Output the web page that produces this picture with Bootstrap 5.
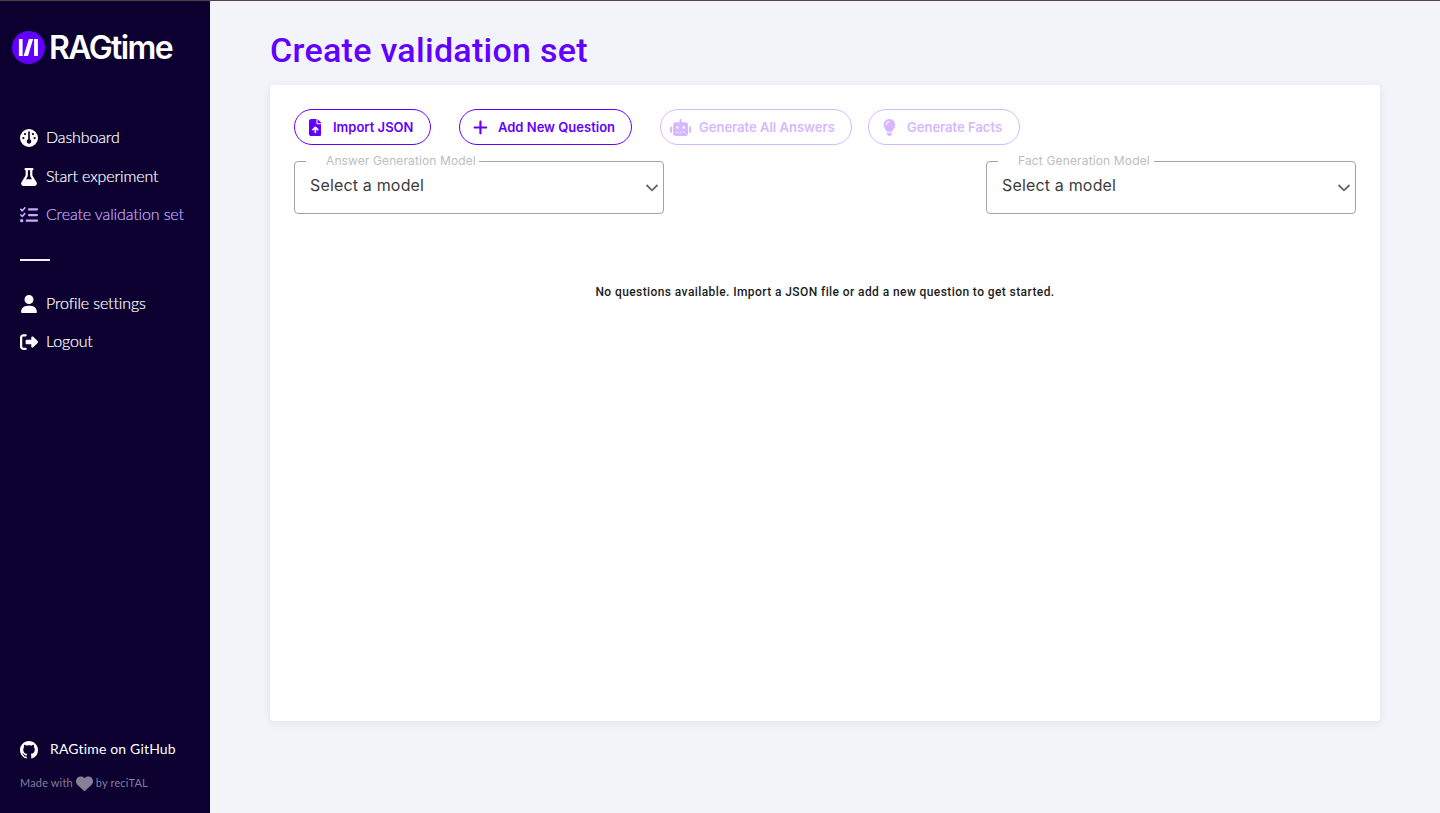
<!DOCTYPE html>
<html lang="en">
<head>
<meta charset="utf-8">
<meta name="viewport" content="width=device-width, initial-scale=1">
<title>RAGtime</title>
<link href="https://cdn.jsdelivr.net/npm/bootstrap@5.3.0/dist/css/bootstrap.min.css" rel="stylesheet">
<style>
body { font-family: Inter, sans-serif; background: #f3f4fa; border-top: 1px solid #54403f; overflow: hidden; }
svg { display: block; flex: none; fill: currentColor; }
.sidebar { width: 210px; background: #0c0030; font-family: Lato, sans-serif; }
.brand { padding: 29px 0 0 12px; gap: 4px; height: 118px; }
.brand-name { font: 600 32px/34px Inter, sans-serif; letter-spacing: -1.6px; padding-top: 1px; }
.side-link { height: 38.5px; padding: 0 0 0 20px; gap: 8px; font-size: 16px; font-weight: 300; line-height: 20px; color: #fff; letter-spacing: -.13px; white-space: nowrap; }
.side-link svg { width: 18px; height: 18px; }
.side-link span { padding-bottom: 2px; -webkit-text-stroke: .2px currentColor; }
.side-link.active { color: #c8aaff; }
.side-rule { width: 30px; height: 2px; margin: 24px 0 24px 20px; background: #f3f0f8; }
.github { padding-left: 20px; gap: 12px; height: 30px; font-size: 14px; line-height: 20px; letter-spacing: .17px; }
.github span { padding-bottom: 2px; }
.credit { padding-left: 20px; gap: 3px; height: 20px; margin: 8px 0 21px; font-size: 11px; letter-spacing: .15px; color: #857f98; }
.page { padding: 0 60px; }
.page-title { font: 500 34px/40px Roboto, sans-serif; letter-spacing: .29px; color: #6200ff; margin: 29px 0 15px; }
.panel { height: 636px; padding: 24px; border-radius: 4px; box-shadow: 0 2px 10px rgba(20,20,50,.08); }
.pill { --bs-btn-color: #6200ff; --bs-btn-border-color: #6200ff; --bs-btn-hover-bg: #6200ff; --bs-btn-disabled-color: #d5b8ff; --bs-btn-disabled-border-color: #d5b8ff; --bs-btn-disabled-opacity: 1; height: 36px; padding: 0; font-size: 13px; font-weight: 600; line-height: 20px; white-space: nowrap; }
.pill-icon { width: 24px; margin: 0 6px 0 8px; }
.pill svg { height: 17px; width: auto; }
.model-box { width: 370px; height: 61px; border: 1px solid #a3a3a3; border-radius: 4px; margin: 0; padding: 0 0 0 11px; min-width: 0; }
.model-box legend { float: none; width: 173px; height: 16px; padding-left: 20px; margin: 0; font-size: 12px; line-height: 16px; letter-spacing: .11px; color: #bdbdbd; white-space: nowrap; }
.model-box.fact legend { width: 156px; letter-spacing: .15px; }
.model-value { padding: 0 4px; height: 34px; font-size: 16px; line-height: 32px; letter-spacing: .17px; color: #3c3c3c; }
.model-value svg { margin-top: 14px; }
.empty-note { margin-top: 68px; font: 500 12px/20px Roboto, sans-serif; letter-spacing: .41px; color: #1d1d1d; }
</style>
</head>
<body>
<div class="d-flex vh-100">
  <nav class="sidebar d-flex flex-column text-white flex-shrink-0">
    <div class="brand d-flex align-items-start">
      <svg width="33" height="34" viewBox="0 0 33 34"><ellipse cx="16.5" cy="17.5" rx="16.5" ry="16.5" fill="#6200ff"/><path fill="#fff" d="M6.9 9h3.7v17H6.9zM16.9 9h4.2L16 26h-4.4zM22.1 9h3.8v17h-3.8z"/></svg>
      <span class="brand-name">RAGtime</span>
    </div>
    <a class="side-link d-flex align-items-center text-decoration-none" href="#"><svg viewBox="0 0 512 512"><path fill-rule="evenodd" d="M0 256a256 256 0 1 1 512 0A256 256 0 1 1 0 256zM320 352c0-26.9-16.5-49.9-40-59.3V88c0-13.3-10.7-24-24-24s-24 10.7-24 24V292.7c-23.5 9.5-40 32.5-40 59.3c0 35.3 28.7 64 64 64s64-28.7 64-64zM144 176a32 32 0 1 0 0-64 32 32 0 1 0 0 64zm-16 80a32 32 0 1 0-64 0 32 32 0 1 0 64 0zm288 32a32 32 0 1 0 0-64 32 32 0 1 0 0 64zM400 144a32 32 0 1 0-64 0 32 32 0 1 0 64 0z"/></svg><span>Dashboard</span></a>
    <a class="side-link d-flex align-items-center text-decoration-none" href="#"><svg viewBox="-32 0 512 512"><path d="M288 0H160 128C110.3 0 96 14.3 96 32s14.3 32 32 32V196.8c0 11.8-3.3 23.5-9.5 33.5L10.3 406.2C3.6 417.2 0 429.7 0 442.6C0 480.9 31.1 512 69.4 512H378.6c38.3 0 69.4-31.1 69.4-69.4c0-12.8-3.6-25.4-10.3-36.4L329.5 230.4c-6.2-10.1-9.5-21.7-9.5-33.5V64c17.7 0 32-14.3 32-32s-14.3-32-32-32H288zM192 196.8V64h64V196.8c0 23.7 6.6 46.9 19 67.1L309.5 320h-171L173 263.9c12.4-20.2 19-43.4 19-67.1z"/></svg><span>Start experiment</span></a>
    <a class="side-link active d-flex align-items-center text-decoration-none" href="#"><svg viewBox="0 0 512 512"><path d="M152.1 38.2c9.9 8.9 10.7 24 1.8 33.9l-72 80c-4.4 4.9-10.6 7.8-17.2 7.9s-12.9-2.4-17.6-7L7 113C-2.3 103.6-2.3 88.4 7 79s24.6-9.4 33.9 0l22.1 22.1 55.1-61.2c8.9-9.9 24-10.7 33.9-1.8zm0 160c9.9 8.9 10.7 24 1.8 33.9l-72 80c-4.4 4.9-10.6 7.8-17.2 7.9s-12.9-2.4-17.6-7L7 273c-9.4-9.4-9.4-24.6 0-33.9s24.6-9.4 33.9 0l22.1 22.1 55.1-61.2c8.9-9.9 24-10.7 33.9-1.8zM224 96c0-17.7 14.3-32 32-32H480c17.7 0 32 14.3 32 32s-14.3 32-32 32H256c-17.7 0-32-14.3-32-32zm0 160c0-17.7 14.3-32 32-32H480c17.7 0 32 14.3 32 32s-14.3 32-32 32H256c-17.7 0-32-14.3-32-32zM160 416c0-17.7 14.3-32 32-32H480c17.7 0 32 14.3 32 32s-14.3 32-32 32H192c-17.7 0-32-14.3-32-32zM48 368a48 48 0 1 1 0 96 48 48 0 1 1 0-96z"/></svg><span>Create validation set</span></a>
    <div class="side-rule"></div>
    <a class="side-link d-flex align-items-center text-decoration-none" href="#"><svg viewBox="-32 0 512 512"><path d="M224 256A128 128 0 1 0 224 0a128 128 0 1 0 0 256zm-45.7 48C79.8 304 0 383.8 0 482.3C0 498.7 13.3 512 29.7 512H418.3c16.4 0 29.7-13.3 29.7-29.7C448 383.8 368.2 304 269.7 304H178.3z"/></svg><span>Profile settings</span></a>
    <a class="side-link d-flex align-items-center text-decoration-none" href="#"><svg viewBox="0 0 512 512"><path d="M377.9 105.9L500.7 228.7c7.2 7.2 11.3 17.1 11.3 27.3s-4.1 20.1-11.3 27.3L377.9 406.1c-6.4 6.4-15 9.9-24 9.9c-18.7 0-33.9-15.2-33.9-33.9l0-62.1-128 0c-17.7 0-32-14.3-32-32l0-64c0-17.7 14.3-32 32-32l128 0 0-62.1c0-18.7 15.2-33.9 33.9-33.9c9 0 17.6 3.6 24 9.9zM160 96L96 96c-17.7 0-32 14.3-32 32l0 256c0 17.7 14.3 32 32 32l64 0c17.7 0 32 14.3 32 32s-14.3 32-32 32l-64 0c-53 0-96-43-96-96L0 128C0 75 43 32 96 32l64 0c17.7 0 32 14.3 32 32s-14.3 32-32 32z"/></svg><span>Logout</span></a>
    <a class="github d-flex align-items-center text-white text-decoration-none mt-auto" href="#"><svg width="18" height="18" viewBox="0 0 16 16"><path d="M8 0C3.58 0 0 3.58 0 8c0 3.54 2.29 6.53 5.47 7.59.4.07.55-.17.55-.38 0-.19-.01-.82-.01-1.49-2.01.37-2.53-.49-2.69-.94-.09-.23-.48-.94-.82-1.13-.28-.15-.68-.52-.01-.53.63-.01 1.08.58 1.23.82.72 1.21 1.87.87 2.33.66.07-.52.28-.87.51-1.07-1.78-.2-3.64-.89-3.64-3.95 0-.87.31-1.59.82-2.15-.08-.2-.36-1.02.08-2.12 0 0 .67-.21 2.2.82.64-.18 1.32-.27 2-.27s1.36.09 2 .27c1.53-1.04 2.2-.82 2.2-.82.44 1.1.16 1.92.08 2.12.51.56.82 1.27.82 2.15 0 3.07-1.87 3.75-3.65 3.95.29.25.54.73.54 1.48 0 1.07-.01 1.93-.01 2.2 0 .21.15.46.55.38A8.01 8.01 0 0 0 16 8c0-4.42-3.58-8-8-8z"/></svg><span>RAGtime on GitHub</span></a>
    <div class="credit d-flex align-items-center">Made with <svg width="17" height="17" viewBox="0 0 512 512"><path d="M47.6 300.4L228.3 469.1c7.5 7 17.4 10.9 27.7 10.9s20.2-3.9 27.7-10.9L464.4 300.4c30.4-28.3 47.6-68 47.6-109.5v-5.8c0-69.9-50.5-129.5-119.4-141C347 36.5 300.6 51.4 268 84L256 96 244 84c-32.6-32.6-79-47.5-124.6-39.9C50.5 55.6 0 115.2 0 185.1v5.8c0 41.5 17.2 81.2 47.6 109.5z"/></svg> by reciTAL</div>
  </nav>
  <main class="page flex-grow-1">
    <h1 class="page-title">Create validation set</h1>
    <section class="panel bg-white">
      <div class="d-flex">
        <button class="pill btn rounded-pill d-flex align-items-center" style="width:137px"><span class="pill-icon d-flex justify-content-center"><svg viewBox="0 0 384 512"><path fill-rule="evenodd" d="M64 0C28.7 0 0 28.7 0 64V448c0 35.3 28.7 64 64 64H320c35.3 0 64-28.7 64-64V160H256c-17.7 0-32-14.3-32-32V0H64zM256 0V128H384L256 0zM216 408c0 13.3-10.7 24-24 24s-24-10.7-24-24V305.9l-31 31c-9.4 9.4-24.6 9.4-33.9 0s-9.4-24.6 0-33.9l72-72c9.4-9.4 24.6-9.4 33.9 0l72 72c9.4 9.4 9.4 24.6 0 33.9s-24.6 9.4-33.9 0l-31-31V408z"/></svg></span><span>Import JSON</span></button>
        <button class="pill btn rounded-pill d-flex align-items-center" style="width:173px;margin-left:28px"><span class="pill-icon d-flex justify-content-center"><svg viewBox="0 0 448 512"><path d="M256 80c0-17.7-14.3-32-32-32s-32 14.3-32 32V224H48c-17.7 0-32 14.3-32 32s14.3 32 32 32H192V432c0 17.7 14.3 32 32 32s32-14.3 32-32V288H400c17.7 0 32-14.3 32-32s-14.3-32-32-32H256V80z"/></svg></span><span>Add New Question</span></button>
        <button class="pill btn rounded-pill d-flex align-items-center" style="width:192px;margin-left:28px" disabled><span class="pill-icon d-flex justify-content-center"><svg viewBox="0 0 640 512"><path fill-rule="evenodd" d="M320 0c17.7 0 32 14.3 32 32V96H472c39.8 0 72 32.2 72 72V440c0 39.8-32.2 72-72 72H168c-39.8 0-72-32.2-72-72V168c0-39.8 32.2-72 72-72H288V32c0-17.7 14.3-32 32-32zM208 384c-8.8 0-16 7.2-16 16s7.2 16 16 16h32c8.8 0 16-7.2 16-16s-7.2-16-16-16H208zm96 0c-8.8 0-16 7.2-16 16s7.2 16 16 16h32c8.8 0 16-7.2 16-16s-7.2-16-16-16H304zm96 0c-8.8 0-16 7.2-16 16s7.2 16 16 16h32c8.8 0 16-7.2 16-16s-7.2-16-16-16H400zM264 256a40 40 0 1 0-80 0 40 40 0 1 0 80 0zm152 40a40 40 0 1 0 0-80 40 40 0 1 0 0 80zM48 224H64V416H48c-26.5 0-48-21.5-48-48V272c0-26.5 21.5-48 48-48zm544 0c26.5 0 48 21.5 48 48v96c0 26.5-21.5 48-48 48H576V224h16z"/></svg></span><span>Generate All Answers</span></button>
        <button class="pill btn rounded-pill d-flex align-items-center" style="width:152px;margin-left:16px" disabled><span class="pill-icon d-flex justify-content-center"><svg viewBox="0 0 384 512"><path fill-rule="evenodd" d="M272 384c9.6-31.9 29.5-59.1 49.2-86.2c5.2-7.1 10.4-14.2 15.4-21.4c19.8-28.5 31.4-63 31.4-100.3C368 78.8 289.2 0 192 0S16 78.8 16 176c0 37.3 11.6 71.9 31.4 100.3c5 7.2 10.2 14.3 15.4 21.4c19.8 27.1 39.7 54.4 49.2 86.2H272zM192 512c44.2 0 80-35.8 80-80V416H112v16c0 44.2 35.8 80 80 80zM112 176c0 8.8-7.2 16-16 16s-16-7.2-16-16c0-61.9 50.1-112 112-112c8.8 0 16 7.2 16 16s-7.2 16-16 16c-44.2 0-80 35.8-80 80z"/></svg></span><span>Generate Facts</span></button>
      </div>
      <div class="d-flex justify-content-between pt-2">
        <fieldset class="model-box">
          <legend>Answer Generation Model</legend>
          <div class="model-value d-flex justify-content-between">Select a model<svg width="14" height="10" viewBox="0 0 14 10"><path d="M1.5 2 7 7.3 12.5 2" fill="none" stroke="#666" stroke-width="1.8"/></svg></div>
        </fieldset>
        <fieldset class="model-box fact">
          <legend>Fact Generation Model</legend>
          <div class="model-value d-flex justify-content-between">Select a model<svg width="14" height="10" viewBox="0 0 14 10"><path d="M1.5 2 7 7.3 12.5 2" fill="none" stroke="#666" stroke-width="1.8"/></svg></div>
        </fieldset>
      </div>
      <p class="empty-note text-center mb-0">No questions available. Import a JSON file or add a new question to get started.</p>
    </section>
  </main>
</div>
<script src="https://cdn.jsdelivr.net/npm/bootstrap@5.3.0/dist/js/bootstrap.bundle.min.js"></script>
</body>
</html>
